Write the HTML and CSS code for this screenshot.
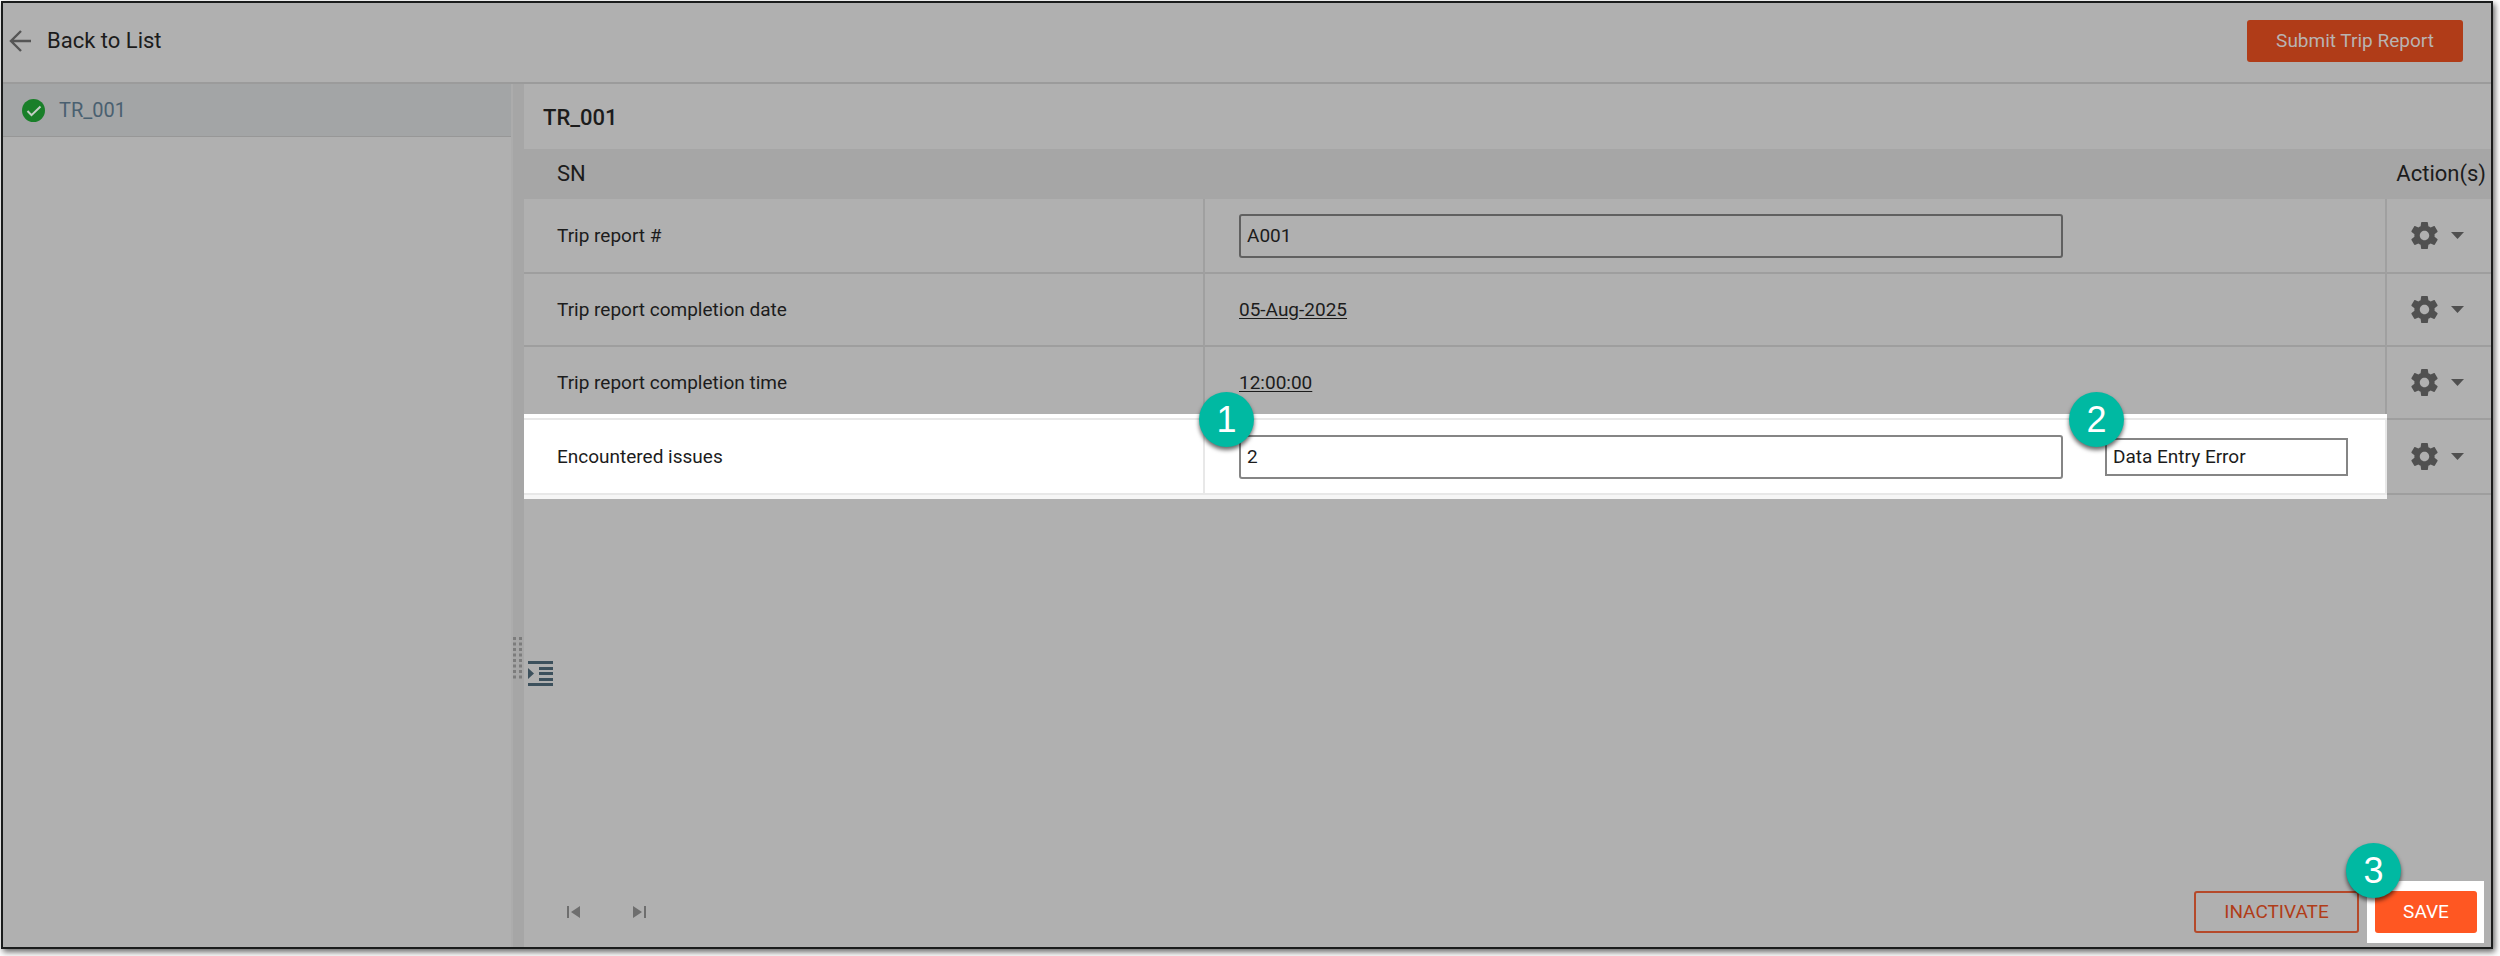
FILE: index.html
```html
<!DOCTYPE html>
<html lang="en">
<head>
  <meta charset="UTF-8" />
  <meta name="viewport" content="width=device-width, initial-scale=1" />
  <title>Trip Report</title>
  <link rel="stylesheet" href="styles.css">
</head>
<body>
  <!-- Shared icons -->
  <svg class="sprite" aria-hidden="true">
    <symbol id="gear" viewBox="2 2 20 20">
      <path d="M19.43 12.98c.04-.32.07-.64.07-.98s-.03-.66-.07-.98l2.11-1.65c.19-.15.24-.42.12-.64l-2-3.46c-.12-.22-.39-.3-.61-.22l-2.49 1c-.52-.4-1.08-.73-1.69-.98l-.38-2.65C14.46 2.18 14.25 2 14 2h-4c-.25 0-.46.18-.49.42l-.38 2.65c-.61.25-1.17.59-1.69.98l-2.49-1c-.23-.09-.49 0-.61.22l-2 3.46c-.13.22-.07.49.12.64l2.11 1.65c-.04.32-.07.65-.07.98s.03.66.07.98l-2.11 1.65c-.19.15-.24.42-.12.64l2 3.46c.12.22.39.3.61.22l2.49-1c.52.4 1.08.73 1.69.98l.38 2.65c.03.24.24.42.49.42h4c.25 0 .46-.18.49-.42l.38-2.65c.61-.25 1.17-.59 1.69-.98l2.49 1c.23.09.49 0 .61-.22l2-3.46c.12-.22.07-.49-.12-.64l-2.11-1.65zM12 15.5c-1.93 0-3.5-1.57-3.5-3.5s1.57-3.5 3.5-3.5 3.5 1.57 3.5 3.5-1.57 3.5-3.5 3.5z"/>
    </symbol>
    <symbol id="caret" viewBox="0 0 13 7">
      <path d="M0 0h13L6.500 7z"/>
    </symbol>
  </svg>

  <div class="app">
    <header class="topbar">
      <a href="#" class="back">
        <svg class="back-icon" viewBox="0 0 22 22" aria-hidden="true"><path d="M22 11H2M12 1L2 11L12 21"/></svg>
        Back to List
      </a>
      <button type="button" class="btn btn-submit">Submit Trip Report</button>
    </header>

    <div class="content">
      <nav class="sidebar">
        <a href="#" class="side-item">
          <svg class="check" viewBox="0 0 23 23" aria-hidden="true"><circle cx="11.500" cy="11.500" r="11.500"/><path d="M5.500 12l4 4.200L18.500 7.500"/></svg>
          TR_001
        </a>
      </nav>

      <div class="splitter">
        <svg class="grip" viewBox="0 0 9 43" aria-hidden="true"><path d="M1.500 0V43M7.500 0V43"/></svg>
      </div>

      <main class="panel">
        <h1 class="panel-title">TR_001</h1>
        <table class="fields">
          <colgroup>
            <col class="col-label">
            <col>
            <col class="col-actions">
          </colgroup>
          <thead>
            <tr><th colspan="2">SN</th><th class="th-actions">Action(s)</th></tr>
          </thead>
          <tbody>
            <tr>
              <td><label for="report">Trip report #</label></td>
              <td><div class="value"><input type="text" id="report" class="box" value="A001"></div></td>
              <td><button type="button" class="menu" aria-label="Actions"><svg class="gear"><use href="#gear"/></svg><svg class="caret"><use href="#caret"/></svg></button></td>
            </tr>
            <tr>
              <td>Trip report completion date</td>
              <td><a href="#" class="link">05-Aug-2025</a></td>
              <td><button type="button" class="menu" aria-label="Actions"><svg class="gear"><use href="#gear"/></svg><svg class="caret"><use href="#caret"/></svg></button></td>
            </tr>
            <tr>
              <td>Trip report completion time</td>
              <td><a href="#" class="link">12:00:00</a></td>
              <td><button type="button" class="menu" aria-label="Actions"><svg class="gear"><use href="#gear"/></svg><svg class="caret"><use href="#caret"/></svg></button></td>
            </tr>
            <tr class="active">
              <td><label for="issues">Encountered issues</label></td>
              <td>
                <div class="value">
                  <div class="field">
                    <input type="text" id="issues" class="box" value="2">
                    <span class="step">1</span>
                  </div>
                  <div class="field">
                    <input type="text" class="box reason" aria-label="Reason" value="Data Entry Error">
                    <span class="step step-reason">2</span>
                  </div>
                </div>
              </td>
              <td><button type="button" class="menu" aria-label="Actions"><svg class="gear"><use href="#gear"/></svg><svg class="caret"><use href="#caret"/></svg></button></td>
            </tr>
          </tbody>
        </table>

        <button type="button" class="expand" aria-label="Expand">
          <svg viewBox="0 0 25 26" aria-hidden="true"><path d="M0 0h25v3H0zM11 6h14v3H11zM11 11h14v3H11zM11 17h14v3H11zM0 22h25v3H0zM0 7l6 5.500L0 18z"/></svg>
        </button>

        <footer class="actions">
          <div class="pager">
            <button type="button" aria-label="First"><svg viewBox="0 0 13 12"><path d="M0 0h2v12H0zM13 0v12L4 6z"/></svg></button>
            <button type="button" aria-label="Last"><svg viewBox="0 0 13 12"><path d="M11 0h2v12h-2zM0 0v12L9 6z"/></svg></button>
          </div>
          <button type="button" class="btn btn-outline">INACTIVATE</button>
          <div class="spot">
            <button type="button" class="btn btn-save">SAVE</button>
            <span class="step step-save">3</span>
          </div>
        </footer>
      </main>
    </div>
  </div>
</body>
</html>
```
FILE: styles.css
```css
* {
  margin: 0;
  padding: 0;
  box-sizing: border-box;
}
body {
  font-family: Roboto, "Liberation Sans", sans-serif;
  font-size: 19px;
  line-height: 24px;
  color: #1c1c1c;
  background: #fff;
  padding: 1px 7px 7px 1px;
}
button,
input {
  font: inherit;
  color: inherit;
}
button {
  background: none;
  border: none;
  cursor: pointer;
}
a {
  color: inherit;
  text-decoration: none;
}
svg {
  display: block;
}
.sprite {
  position: absolute;
  width: 0;
  height: 0;
}
.app {
  display: flex;
  flex-direction: column;
  min-height: calc(100vh - 8px);
  border: 2px solid #1a1c1c;
  background: #b0b0b0;
  box-shadow: 2px 3px 6px rgb(0 0 0 / 0.6);
}

/* Top bar */
.topbar {
  display: flex;
  justify-content: space-between;
  align-items: center;
  height: 81px;
  padding: 0 28px 3px 6px;
  border-bottom: 2px solid #9b9b9b;
}
.back {
  display: flex;
  align-items: center;
  gap: 16px;
  font-size: 22px;
}
.back-icon {
  width: 22px;
  height: 22px;
  fill: none;
  stroke: #555;
  stroke-width: 2.4;
}
.btn {
  height: 42px;
  border-radius: 3px;
  font-size: 19px;
}
.btn-submit {
  width: 216px;
  background: #b03c18;
  color: #b9b3b1;
}

/* Sidebar */
.content {
  display: flex;
  flex: 1;
}
.sidebar {
  width: 508px;
}
.side-item {
  display: flex;
  align-items: center;
  gap: 14px;
  height: 53px;
  padding-left: 19px;
  background: #a3a5a6;
  border-bottom: 1px solid #979797;
  color: #4a6070;
  font-size: 20px;
}
.check {
  width: 23px;
  height: 23px;
  fill: #197f29;
}
.check path {
  fill: none;
  stroke: #c4cfc6;
  stroke-width: 2;
}
.splitter {
  display: flex;
  align-items: center;
  width: 13px;
  padding-top: 285px;
  background: #a6a6a6;
  border-left: 2px solid #acacac;
}
.grip {
  width: 9px;
  height: 43px;
  stroke: #7c7c7c;
  stroke-width: 3;
  stroke-dasharray: 3 2.5;
}

/* Fields */
.panel {
  display: flex;
  flex-direction: column;
  flex: 1;
}
.panel-title {
  height: 65px;
  padding: 0 19px;
  font-size: 22px;
  font-weight: 500;
  line-height: 67px;
}
.fields {
  width: 100%;
  table-layout: fixed;
  border-spacing: 0;
}
.col-label {
  width: 681px;
}
.col-actions {
  width: 104px;
}
th {
  height: 50px;
  padding-left: 33px;
  background: #a6a6a6;
  font-size: 22px;
  font-weight: 400;
  text-align: left;
}
.th-actions {
  padding: 0 5px 0 0;
  text-align: right;
}
td {
  height: 73px;
  padding: 14px 33px;
  border-right: 2px solid #a0a0a0;
  border-bottom: 2px solid #9e9e9e;
}
td:nth-child(2) {
  padding: 14px 37px 14px 34px;
}
td:last-child {
  padding: 0 24px;
  border-right: none;
}
tr:first-child td {
  height: 75px;
}
.value {
  display: grid;
  grid-template-columns: 1fr 243px;
  align-items: center;
  gap: 42px;
}
.field {
  position: relative;
}
.box {
  display: block;
  width: 100%;
  height: 44px;
  padding: 0 6px;
  background: transparent;
  border: 2px solid #606060;
  border-radius: 3px;
  outline: none;
}
.link {
  text-decoration: underline;
  text-underline-offset: 2px;
}
.menu {
  display: flex;
  align-items: center;
  gap: 13px;
  fill: #505050;
}
.gear {
  width: 27px;
  height: 27px;
}
.caret {
  width: 13px;
  height: 7px;
}

/* Highlighted row */
tr:nth-child(3) td {
  border-bottom: none;
  height: 71px;
}
.active td {
  height: 77px;
  border-top: 2px solid #9e9e9e;
}
.active td:not(:last-child) {
  background: #fff;
  border-color: #e8e8e8;
  box-shadow: 0 -4px #fff, 0 4px #f6f6f6;
}
.active .box {
  border-color: #858585;
}
.active .reason {
  height: 38px;
  border-radius: 0;
}
.step {
  position: absolute;
  top: -43px;
  left: -40px;
  width: 55px;
  height: 55px;
  border-radius: 50%;
  background: #00b9a2;
  box-shadow: 0 3px 4px rgb(0 0 0 / 0.6);
  color: #fff;
  font-family: "Liberation Sans", Arial, sans-serif;
  font-size: 36px;
  line-height: 56px;
  text-align: center;
}
.step-reason {
  top: -46px;
  left: -36px;
}

/* Bottom of the panel */
.expand {
  width: 25px;
  margin: 166px 0 0 4px;
  fill: #3c505c;
}
.actions {
  display: flex;
  align-items: center;
  gap: 8px;
  margin-top: auto;
  padding: 0 7px 4px 0;
}
.pager {
  display: flex;
  gap: 53px;
  margin-right: auto;
  padding-left: 43px;
}
.pager svg {
  width: 13px;
  height: 12px;
  fill: #6e6e6e;
}
.btn-outline {
  width: 165px;
  border: 2px solid #b5492a;
  color: #b03c18;
}
.spot {
  position: relative;
  padding: 10px 7px 10px 8px;
  background: #fff;
}
.btn-save {
  display: block;
  width: 102px;
  background: #ff5722;
  color: #fff;
}
.step-save {
  top: -38px;
  left: -21px;
}
```
